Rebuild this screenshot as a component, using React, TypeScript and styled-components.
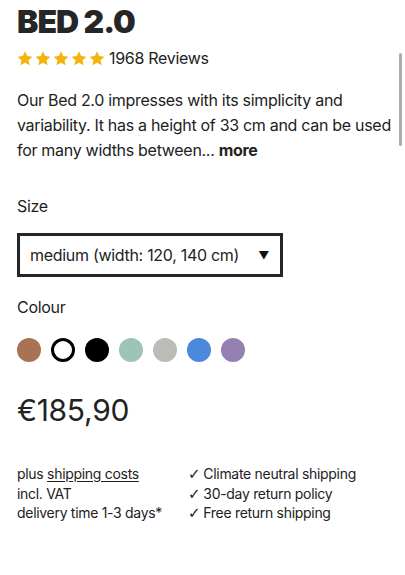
import React from "react";
import styled, { createGlobalStyle } from "styled-components";

const Global = createGlobalStyle`
  html, body { margin: 0; padding: 0; background: #fff; }
  body { font-family: Inter, "Noto Sans", sans-serif; color: #222; -webkit-font-smoothing: antialiased; }
  * { box-sizing: border-box; }
`;

const Page = styled.div`
  position: relative;
  width: 405px;
  height: 575px;
  padding: 6px 0 0 17px;
  overflow: hidden;
  letter-spacing: -0.3px;
`;

const Title = styled.h1`
  margin: 0;
  font-size: 32px;
  line-height: 32px;
  font-weight: 900;
  letter-spacing: -1px;
  color: #262626;
`;

const Rating = styled.div`
  display: flex;
  align-items: center;
  gap: 4px;
  margin-top: 10px;
  height: 20px;
`;

const Stars = styled.div`
  display: flex;
  gap: 2px;
`;

const Reviews = styled.span`
  font-size: 16px;
  color: #222;
`;

const Description = styled.p`
  margin: 20px 0 0;
  width: 378px;
  font-size: 16px;
  line-height: 25px;
  color: #222;
`;

const More = styled.b`
  font-weight: 700;
`;

const Label = styled.div<{ $top: number }>`
  margin-top: ${(p) => p.$top}px;
  font-size: 16px;
  line-height: 20px;
  color: #222;
`;

const Select = styled.div`
  margin-top: 17px;
  width: 266px;
  height: 44px;
  border: 3px solid #262626;
  display: flex;
  align-items: center;
  justify-content: space-between;
  padding: 0 11px 0 10px;
  font-size: 16px;
  color: #222;
`;

const Arrow = styled.span`
  font-size: 11px;
  color: #111;
`;

const Swatches = styled.div`
  display: flex;
  gap: 10px;
  margin-top: 21px;
`;

const Swatch = styled.div<{ $color: string; $selected?: boolean }>`
  width: 24px;
  height: 24px;
  border-radius: 50%;
  background: ${(p) => (p.$selected ? "#fff" : p.$color)};
  border: ${(p) => (p.$selected ? "3px solid #000" : "none")};
`;

const Price = styled.div`
  margin-top: 31px;
  font-size: 30px;
  line-height: 34px;
  font-weight: 400;
  color: #222;
`;

const Info = styled.div`
  display: grid;
  grid-template-columns: 171px auto;
  margin-top: 37px;
  font-size: 14px;
  color: #222;
`;

const Column = styled.div`
  display: flex;
  flex-direction: column;
`;

const Line = styled.div`
  height: 19.5px;
  line-height: 19.5px;
  white-space: nowrap;
`;

const Link = styled.span`
  text-decoration: underline;
  text-underline-offset: 2px;
`;

const Check = styled.span`
  font-family: "DejaVu Sans", sans-serif;
  font-size: 15px;
  line-height: 1;
  margin-right: 3px;
`;

const ScrollThumb = styled.div`
  position: absolute;
  left: 399px;
  top: 53px;
  width: 3px;
  height: 93px;
  border-radius: 2px;
  background: #ababab;
`;

const Star = () => (
  <svg width="16" height="15" viewBox="0 0 24 23">
    <path
      d="M12 0.5l3.4 7.2 7.9 1-5.8 5.4 1.5 7.8L12 18.1l-7 3.8 1.5-7.8L0.7 8.7l7.9-1z"
      fill="#f2b50c"
    />
  </svg>
);

const colours = ["#a87352", "#fff", "#000000", "#9ec4b6", "#bcbcb6", "#4a89dc", "#9480b2"];

const benefits = ["Climate neutral shipping", "30-day return policy", "Free return shipping"];

export default function App() {
  return (
    <>
      <Global />
      <Page>
        <Title>BED 2.0</Title>
        <Rating>
          <Stars>
            {[0, 1, 2, 3, 4].map((i) => (
              <Star key={i} />
            ))}
          </Stars>
          <Reviews>1968 Reviews</Reviews>
        </Rating>
        <Description>
          Our Bed 2.0 impresses with its simplicity and variability. It has a height of 33 cm and can be used
          for many widths between... <More>more</More>
        </Description>
        <Label $top={33}>Size</Label>
        <Select>
          <span>medium (width: 120, 140 cm)</span>
          <Arrow>▼</Arrow>
        </Select>
        <Label $top={20}>Colour</Label>
        <Swatches>
          {colours.map((c, i) => (
            <Swatch key={i} $color={c} $selected={i === 1} />
          ))}
        </Swatches>
        <Price>€185,90</Price>
        <Info>
          <Column>
            <Line>
              plus <Link>shipping costs</Link>
            </Line>
            <Line>incl. VAT</Line>
            <Line>delivery time 1-3 days*</Line>
          </Column>
          <Column>
            {benefits.map((b) => (
              <Line key={b}>
                <Check>✓</Check>
                {b}
              </Line>
            ))}
          </Column>
        </Info>
        <ScrollThumb />
      </Page>
    </>
  );
}
